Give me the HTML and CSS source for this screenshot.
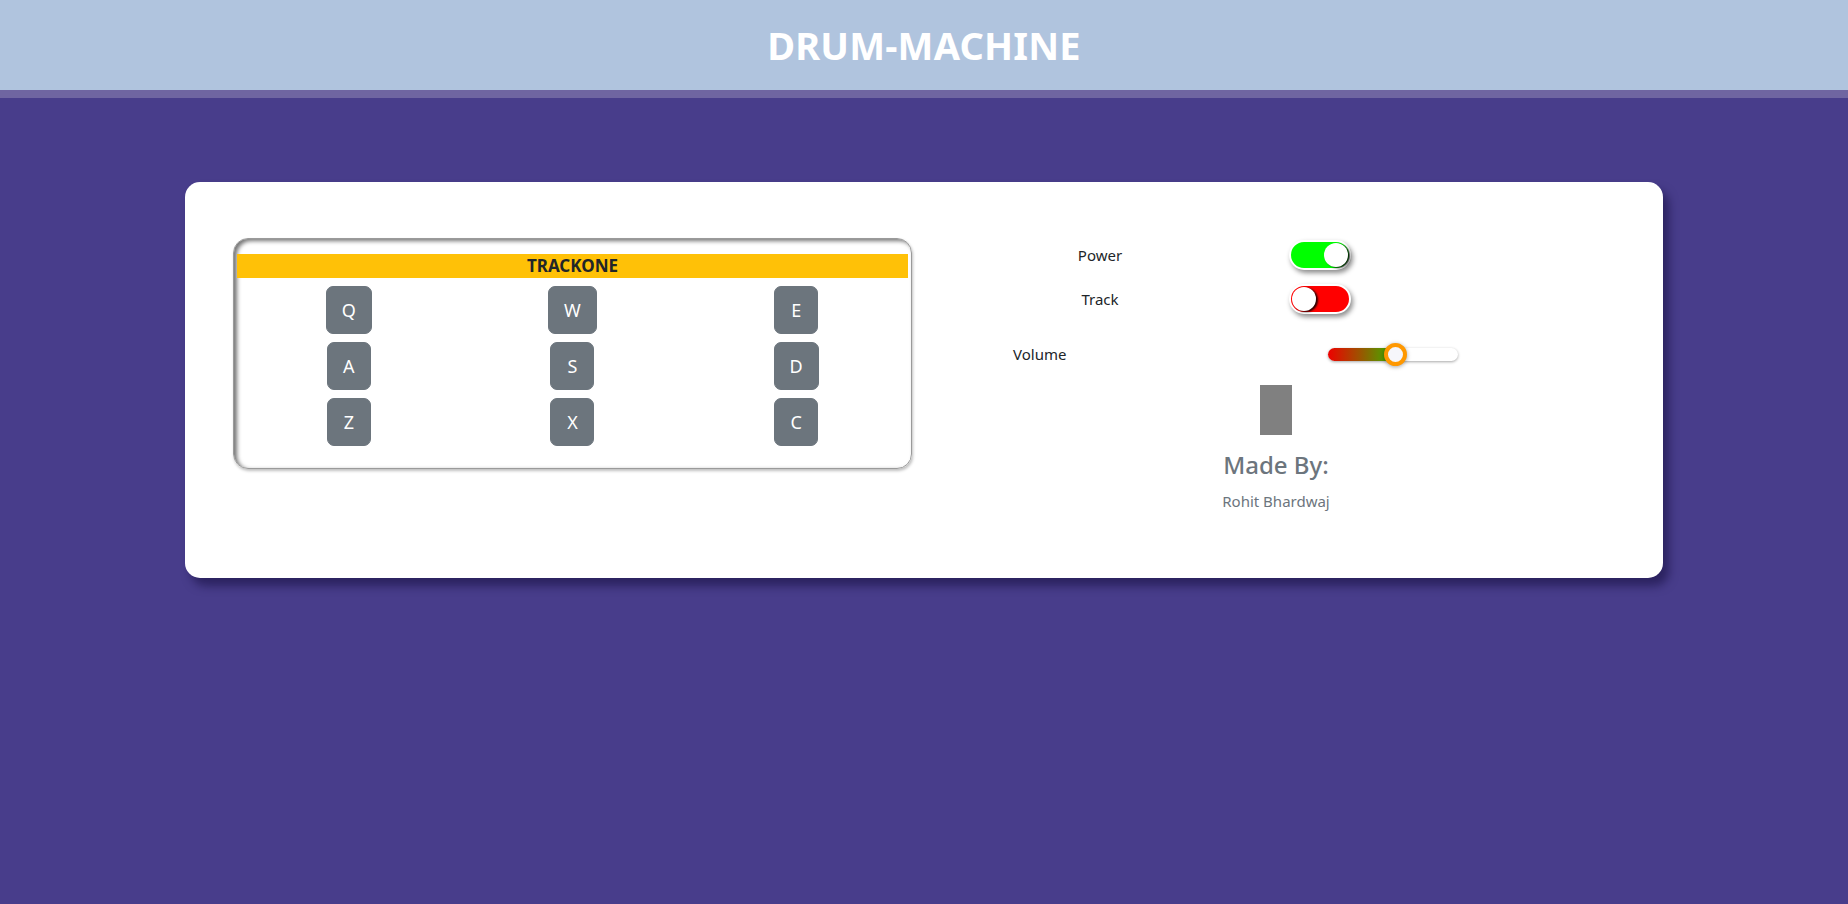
FILE: index.html
```html
<!DOCTYPE html>
<html lang="en">
<head>
<meta charset="utf-8">
<title>Drum Machine</title>
<link rel="stylesheet" href="styles.css">
</head>
<body>
<header class="topbar">
  <h1 class="title">DRUM-MACHINE</h1>
</header>
<main class="stage">
  <section class="card">
    <div class="pad-box">
      <div class="track-name">TRACKONE</div>
      <div class="pads">
        <div class="cell"><button class="pad">Q</button></div>
        <div class="cell"><button class="pad">W</button></div>
        <div class="cell"><button class="pad">E</button></div>
        <div class="cell"><button class="pad">A</button></div>
        <div class="cell"><button class="pad">S</button></div>
        <div class="cell"><button class="pad">D</button></div>
        <div class="cell"><button class="pad">Z</button></div>
        <div class="cell"><button class="pad">X</button></div>
        <div class="cell"><button class="pad">C</button></div>
      </div>
    </div>
    <div class="controls">
      <div class="switches">
        <div class="switch-row">
          <span class="label">Power</span>
          <span class="toggle-cell"><span class="toggle toggle-on"><span class="knob"></span></span></span>
        </div>
        <div class="switch-row">
          <span class="label">Track</span>
          <span class="toggle-cell"><span class="toggle toggle-off"><span class="knob"></span></span></span>
        </div>
        <div class="volume-row">
          <span class="vol-label">Volume</span>
          <span class="slider">
            <span class="slider-fill" style="width: 52%"></span>
            <span class="slider-thumb" style="left: 52%"></span>
          </span>
        </div>
      </div>
      <div class="display"></div>
      <h4 class="made-by">Made By:</h4>
      <p class="author">Rohit Bhardwaj</p>
    </div>
  </section>
</main>
</body>
</html>
```

FILE: styles.css
```css
* { box-sizing: border-box; }

html, body {
  margin: 0;
  padding: 0;
}

body {
  background: #483d8b;
  font-family: "Noto Sans", "Open Sans", sans-serif;
  font-size: 16px;
  color: #212529;
  min-height: 904px;
}

.topbar {
  height: 98px;
  background: #b0c4de;
  border-bottom: 8px solid #6f65a1;
  display: flex;
  align-items: center;
  justify-content: center;
}

.title {
  margin: 0;
  color: #fff;
  font-size: 38px;
  font-weight: 700;
  line-height: 1;
  letter-spacing: 0.2px;
}

.stage {
  padding-top: 84px;
  display: flex;
  justify-content: center;
}

.card {
  width: 1478px;
  height: 396px;
  background: #fff;
  border-radius: 15px;
  box-shadow: 6px 8px 10px rgba(20, 12, 60, 0.55);
  padding: 56px 48px 0 48px;
  display: grid;
  grid-template-columns: 679px 1fr;
  align-items: start;
}

/* ---- pad box ---- */
.pad-box {
  height: 231px;
  border: 1px solid #9a9a9a;
  border-radius: 15px;
  box-shadow: inset 3px 2px 4px rgba(0, 0, 0, 0.55), 1px 2px 3px rgba(0, 0, 0, 0.25);
  padding: 15px 3px 0 3px;
}

.track-name {
  height: 24px;
  background: #ffc107;
  color: #212529;
  font-weight: 700;
  font-size: 17px;
  line-height: 24px;
  text-align: center;
}

.pads {
  margin-top: 8px;
  display: grid;
  grid-template-columns: repeat(3, 1fr);
  row-gap: 8px;
}

.cell {
  display: flex;
  justify-content: center;
}

.pad {
  height: 48px;
  padding: 0 15px;
  min-width: 44px;
  border: 1px solid #6c757d;
  border-radius: 7px;
  background: #6c757d;
  color: #fff;
  font-family: "Noto Sans", "Open Sans", sans-serif;
  font-size: 18px;
  line-height: 46px;
}

/* ---- controls ---- */
.controls {
  padding-left: 25px;
  display: flex;
  flex-direction: column;
  align-items: center;
}

.switches {
  align-self: flex-start;
  margin-left: 63px;
  padding-top: 2px;
}

.switch-row {
  display: flex;
  align-items: center;
  height: 30px;
  margin-bottom: 14px;
}

.label {
  width: 200px;
  text-align: center;
  font-size: 15px;
}

.toggle-cell {
  width: 240px;
  display: flex;
  justify-content: center;
}

.toggle {
  position: relative;
  width: 62px;
  height: 30px;
  border-radius: 15px;
  border: 2px solid #fff;
  box-shadow: 2px 3px 5px rgba(0, 0, 0, 0.45);
  display: flex;
  align-items: center;
  padding: 0 1px;
}

.toggle-on {
  background: #00ff00;
  justify-content: flex-end;
}

.toggle-off {
  background: #ff0000;
  justify-content: flex-start;
}

.knob {
  width: 24px;
  height: 24px;
  border-radius: 50%;
  background: #fff;
  box-shadow: 2px 1px 2px rgba(0, 0, 0, 0.85);
}

.volume-row {
  display: flex;
  align-items: center;
  height: 20px;
  margin-top: 30px;
  padding-left: 13px;
}

.vol-label {
  width: 315px;
  font-size: 15px;
}

.slider {
  position: relative;
  width: 130px;
  height: 13px;
  border-radius: 7px;
  background: #fff;
  box-shadow: 0 1px 3px rgba(0, 0, 0, 0.35);
  display: block;
}

.slider-fill {
  position: absolute;
  left: 0;
  top: 0;
  bottom: 0;
  border-radius: 7px 0 0 7px;
  background: linear-gradient(to right, #ee0000, #a05000 45%, #33bb00);
}

.slider-thumb {
  position: absolute;
  top: 50%;
  width: 23px;
  height: 23px;
  margin: -11.5px 0 0 -11.5px;
  border-radius: 50%;
  background: #f6f6fb;
  border: 4px solid #ff9800;
  box-shadow: 0 1px 4px rgba(0, 0, 0, 0.35);
}

.display {
  width: 32px;
  height: 50px;
  background: #808080;
  margin-top: 21px;
}

.made-by {
  margin: 14px 0 0;
  font-size: 24px;
  font-weight: 500;
  line-height: 32px;
  color: #6c757d;
}

.author {
  margin: 8px 0 0;
  font-size: 15px;
  line-height: 24px;
  color: #6c757d;
}
```
